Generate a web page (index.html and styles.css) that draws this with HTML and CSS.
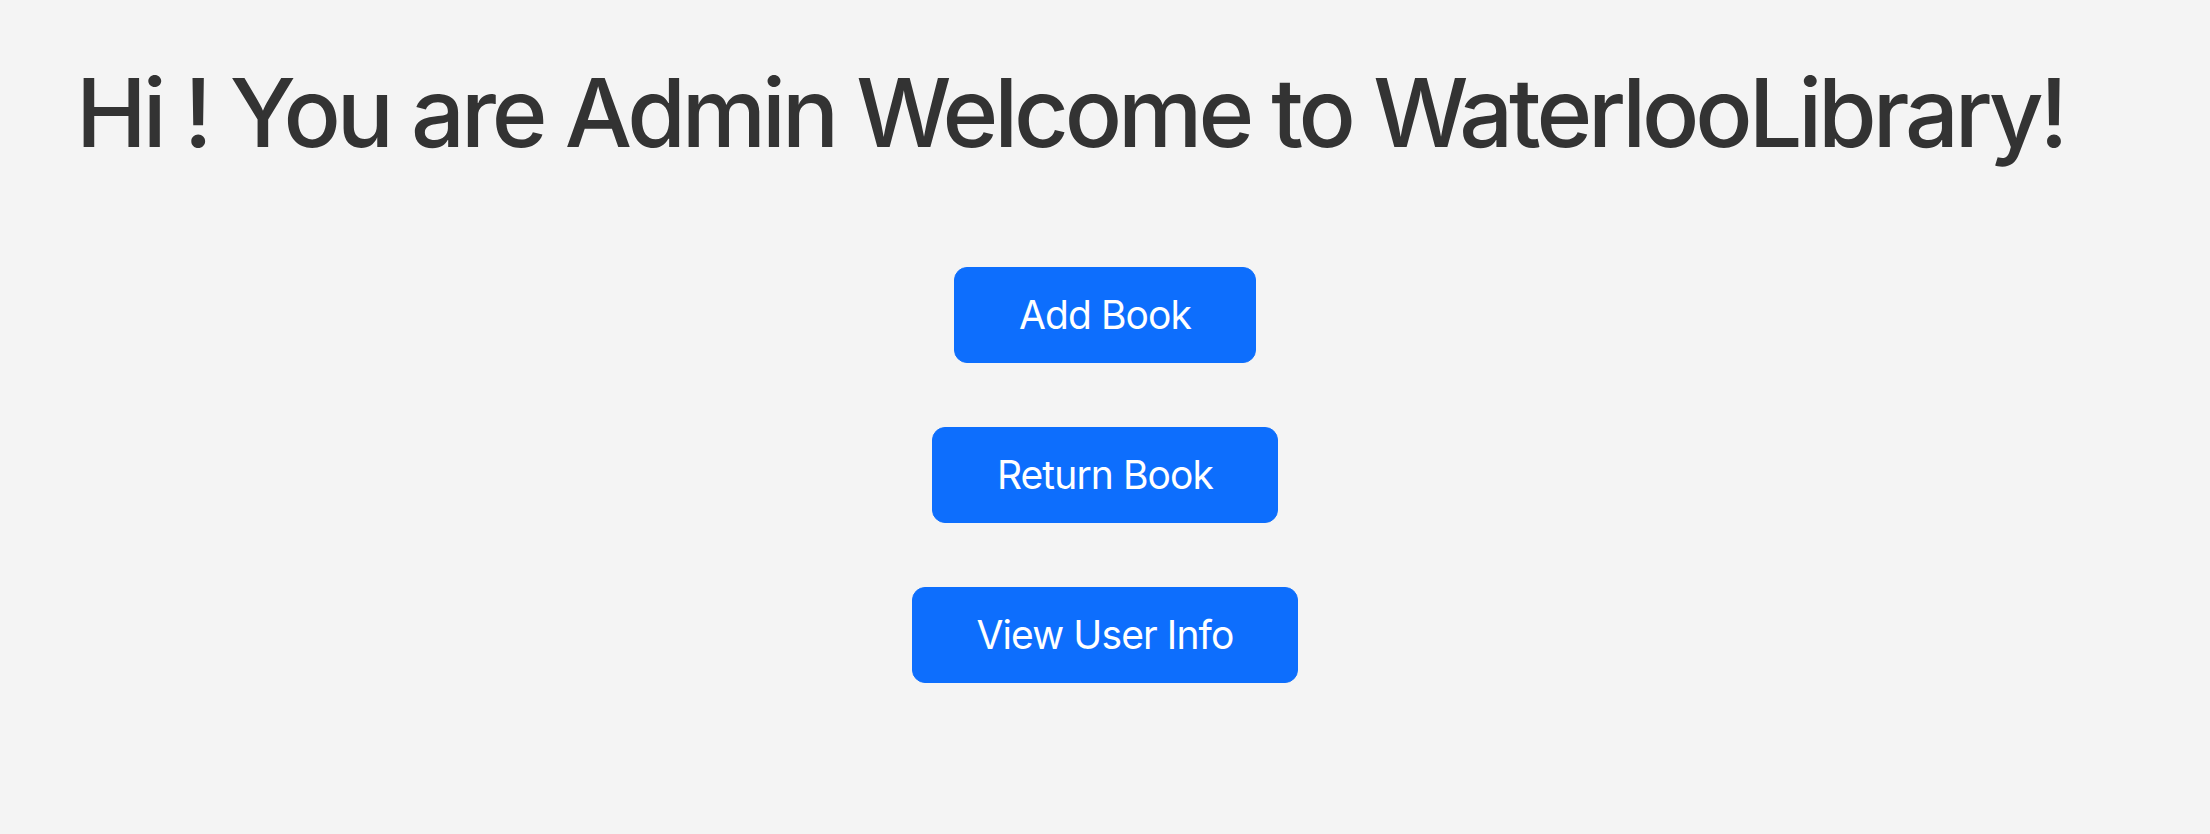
FILE: index.html
```html
<!DOCTYPE html>
<html lang="en">
<head>
<meta charset="utf-8">
<title>WaterlooLibrary Admin</title>
<link rel="stylesheet" href="styles.css">
</head>
<body>
<main class="page">
  <h1 class="title">Hi ! You are Admin Welcome to WaterlooLibrary!</h1>
  <div class="actions">
    <button class="btn" type="button">Add Book</button>
    <button class="btn" type="button">Return Book</button>
    <button class="btn" type="button">View User Info</button>
  </div>
</main>
</body>
</html>
```

FILE: styles.css
```css
* { box-sizing: border-box; }
html, body {
  margin: 0;
  padding: 0;
  background: #f4f4f4;
  height: 100%;
}
body {
  font-family: Inter, "Noto Sans", "Liberation Sans", sans-serif;
  color: #333333;
}
.page {
  display: flex;
  flex-direction: column;
  padding: 56px 76px 0;
}
.title {
  margin: 0;
  font-size: 95px;
  font-weight: 500;
  line-height: 1.2;
  letter-spacing: -4.1px;
  white-space: nowrap;
  color: #333333;
}
.actions {
  display: flex;
  flex-direction: column;
  align-items: center;
  gap: 64px;
  margin-top: 97px;
}
.btn {
  font-family: Inter, "Noto Sans", "Liberation Sans", sans-serif;
  font-size: 39px;
  font-weight: 400;
  line-height: 1.5;
  letter-spacing: -0.9px;
  color: #ffffff;
  background: #0d6efd;
  border: 1px solid #0d6efd;
  border-radius: 13px;
  padding: 17px 64px;
  height: 96px;
  cursor: pointer;
}
```
